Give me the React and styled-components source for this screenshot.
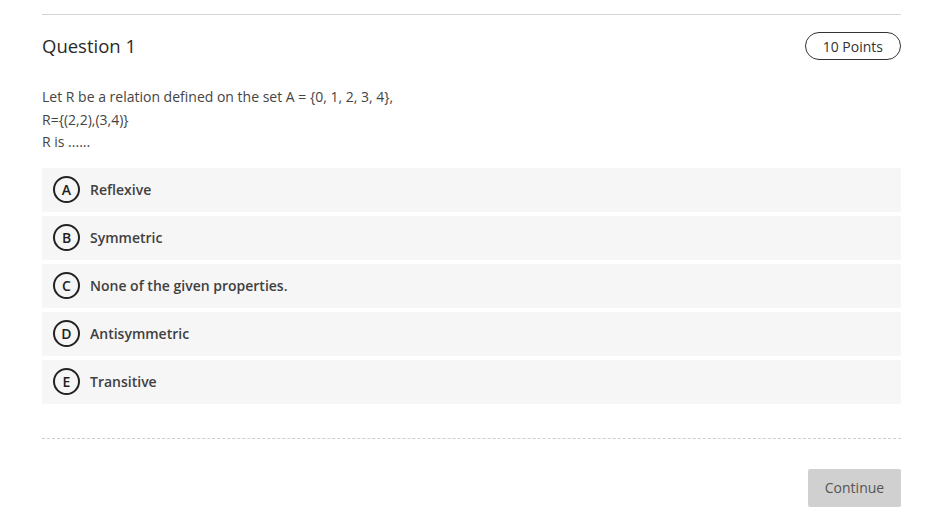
import React from 'react'
import styled, { createGlobalStyle } from 'styled-components'

const GlobalStyle = createGlobalStyle`
  body {
    margin: 0;
    background: #fff;
    font-family: "Open Sans", "Liberation Sans", sans-serif;
  }
`

const options = [
  { key: 'A', label: 'Reflexive' },
  { key: 'B', label: 'Symmetric' },
  { key: 'C', label: 'None of the given properties.' },
  { key: 'D', label: 'Antisymmetric' },
  { key: 'E', label: 'Transitive' },
]

const App = () => (
  <>
    <GlobalStyle />
    <Page>
      <Header>
        <Title>Question 1</Title>
        <Points>10 Points</Points>
      </Header>

      <Prompt>
        <div>Let R be a relation defined on the set A = {'{'}0, 1, 2, 3, 4{'}'},</div>
        <div>R={'{'}(2,2),(3,4){'}'}</div>
        <div>R is ......</div>
      </Prompt>

      <Options>
        {options.map(o => (
          <Option key={o.key}>
            <Letter>{o.key}</Letter>
            <Label>{o.label}</Label>
          </Option>
        ))}
      </Options>

      <Footer>
        <ContinueButton>Continue</ContinueButton>
      </Footer>
    </Page>
  </>
)

export default App

const Page = styled.div`
  margin: 14px 29px 0 42px;
  border-top: 1px solid #d4d4d4;
`

const Header = styled.div`
  display: flex;
  align-items: center;
  justify-content: space-between;
  padding-top: 17px;
`

const Title = styled.h2`
  margin: 0 0 2px;
  font-size: 18.5px;
  font-weight: 400;
  color: #2a2a2a;
`

const Points = styled.div`
  height: 26px;
  padding: 0 17px;
  border: 1px solid #333;
  border-radius: 14px;
  display: flex;
  align-items: center;
  font-size: 14px;
  color: #333;
`

const Prompt = styled.div`
  margin-top: 26px;
  font-size: 14px;
  line-height: 22.5px;
  color: #444;
`

const Options = styled.div`
  margin-top: 14px;
  display: flex;
  flex-direction: column;
  gap: 4px;
`

const Option = styled.div`
  height: 44px;
  background: #f6f6f6;
  display: flex;
  align-items: center;
  padding-left: 11px;
  gap: 10px;
`

const Letter = styled.div`
  width: 23px;
  height: 23px;
  border: 2px solid #222;
  border-radius: 50%;
  display: flex;
  align-items: center;
  justify-content: center;
  font-size: 14px;
  font-weight: 600;
  color: #222;
`

const Label = styled.span`
  font-size: 14px;
  font-weight: 600;
  color: #404040;
`

const Footer = styled.div`
  margin-top: 34px;
  border-top: 1px dashed #cfcfcf;
  padding-top: 30px;
  display: flex;
  justify-content: flex-end;
`

const ContinueButton = styled.button`
  width: 93px;
  height: 38px;
  border: none;
  border-radius: 2px;
  background: #d0d0d0;
  color: #555;
  font-family: inherit;
  font-size: 14px;
`
